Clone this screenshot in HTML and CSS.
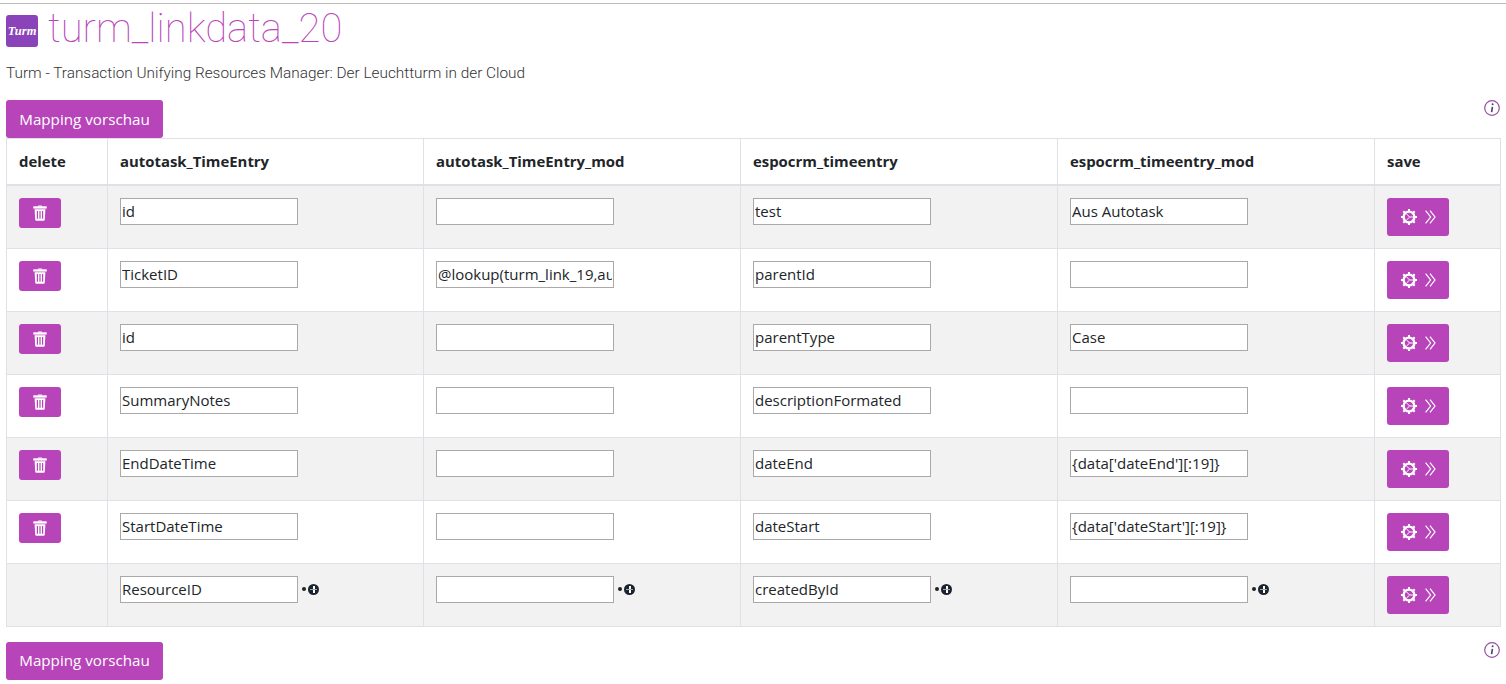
FILE: index.html
```html
<!DOCTYPE html>
<html lang="en">
<head>
    <meta charset="UTF-8">
    <meta name="viewport" content="width=device-width, initial-scale=1.0">
    <title>turm_linkdata_20</title>
    <link rel="stylesheet" href="styles.css">
</head>
<body>
    <svg width="0" height="0" class="defs">
        <symbol id="icon-trash" viewBox="0 0 14 16">
            <path d="M4.6 1.4 5.2.4h3.6l.6 1z" fill="currentColor"/>
            <path d="M.3 1.3h13.4v2.3H.3z" fill="currentColor"/>
            <path d="M1.6 4.2h10.8l-.6 10.4a1.2 1.2 0 0 1-1.2 1.2H3.4a1.2 1.2 0 0 1-1.2-1.2z" fill="currentColor"/>
            <path d="M4.4 6v7.8M7 6v7.8M9.6 6v7.8" stroke="#b744b9" stroke-width="1.2"/>
        </symbol>
        <symbol id="icon-gear" viewBox="0 0 16 16">
            <circle cx="8" cy="8" r="5.4" fill="none" stroke="currentColor" stroke-width="2.4"/>
            <path d="M8 0v3M8 13v3M0 8h3M13 8h3M2.3 2.3l2 2M11.7 11.7l2 2M13.7 2.3l-2 2M4.3 11.7l-2 2" stroke="currentColor" stroke-width="2"/>
            <path d="M5.4 4.8 8.6 8 5.4 11.2M8.6 8H12" fill="none" stroke="currentColor" stroke-width="1"/>
        </symbol>
        <symbol id="icon-chevrons" viewBox="0 0 11 14">
            <path d="M.6.6 5.6 7 .6 13.4M5 .6 10 7 5 13.4" fill="none" stroke="currentColor" stroke-width="1.2"/>
        </symbol>
        <symbol id="icon-info" viewBox="0 0 16 16">
            <circle cx="8" cy="8" r="7.3" fill="none" stroke="#96509f" stroke-width="1.2"/>
            <circle cx="8.6" cy="4.3" r="1" fill="#4f3a7a"/>
            <path d="M8.4 6.8 7.6 12.2" stroke="#4f3a7a" stroke-width="1.6"/>
        </symbol>
    </svg>

    <header class="page-head">
        <div class="title-row">
            <div class="logo">Turm</div>
            <h1>turm_linkdata_20</h1>
        </div>
        <p class="subtitle">Turm - Transaction Unifying Resources Manager: Der Leuchtturm in der Cloud</p>
    </header>

    <div class="toolbar">
        <button type="button" class="btn btn-preview">Mapping vorschau</button>
        <svg class="info"><use href="#icon-info"/></svg>
    </div>

    <table class="map-table">
        <colgroup>
            <col class="col-delete">
            <col class="col-first">
            <col class="col-field">
            <col class="col-field">
            <col class="col-field">
            <col class="col-save">
        </colgroup>
        <thead>
            <tr>
                <th>delete</th>
                <th>autotask_TimeEntry</th>
                <th>autotask_TimeEntry_mod</th>
                <th>espocrm_timeentry</th>
                <th>espocrm_timeentry_mod</th>
                <th>save</th>
            </tr>
        </thead>
        <tbody>
            <tr>
                <td><button type="button" class="btn btn-delete"><svg class="ico-trash"><use href="#icon-trash"/></svg></button></td>
                <td><input type="text" value="id"></td>
                <td><input type="text" value=""></td>
                <td><input type="text" value="test"></td>
                <td><input type="text" value="Aus Autotask"></td>
                <td><button type="button" class="btn btn-save"><svg class="ico-gear"><use href="#icon-gear"/></svg><svg class="ico-chev"><use href="#icon-chevrons"/></svg></button></td>
            </tr>
            <tr>
                <td><button type="button" class="btn btn-delete"><svg class="ico-trash"><use href="#icon-trash"/></svg></button></td>
                <td><input type="text" value="TicketID"></td>
                <td><input type="text" value="@lookup(turm_link_19,autotask_id)"></td>
                <td><input type="text" value="parentId"></td>
                <td><input type="text" value=""></td>
                <td><button type="button" class="btn btn-save"><svg class="ico-gear"><use href="#icon-gear"/></svg><svg class="ico-chev"><use href="#icon-chevrons"/></svg></button></td>
            </tr>
            <tr>
                <td><button type="button" class="btn btn-delete"><svg class="ico-trash"><use href="#icon-trash"/></svg></button></td>
                <td><input type="text" value="id"></td>
                <td><input type="text" value=""></td>
                <td><input type="text" value="parentType"></td>
                <td><input type="text" value="Case"></td>
                <td><button type="button" class="btn btn-save"><svg class="ico-gear"><use href="#icon-gear"/></svg><svg class="ico-chev"><use href="#icon-chevrons"/></svg></button></td>
            </tr>
            <tr>
                <td><button type="button" class="btn btn-delete"><svg class="ico-trash"><use href="#icon-trash"/></svg></button></td>
                <td><input type="text" value="SummaryNotes"></td>
                <td><input type="text" value=""></td>
                <td><input type="text" value="descriptionFormated"></td>
                <td><input type="text" value=""></td>
                <td><button type="button" class="btn btn-save"><svg class="ico-gear"><use href="#icon-gear"/></svg><svg class="ico-chev"><use href="#icon-chevrons"/></svg></button></td>
            </tr>
            <tr>
                <td><button type="button" class="btn btn-delete"><svg class="ico-trash"><use href="#icon-trash"/></svg></button></td>
                <td><input type="text" value="EndDateTime"></td>
                <td><input type="text" value=""></td>
                <td><input type="text" value="dateEnd"></td>
                <td><input type="text" value="{data['dateEnd'][:19]}"></td>
                <td><button type="button" class="btn btn-save"><svg class="ico-gear"><use href="#icon-gear"/></svg><svg class="ico-chev"><use href="#icon-chevrons"/></svg></button></td>
            </tr>
            <tr>
                <td><button type="button" class="btn btn-delete"><svg class="ico-trash"><use href="#icon-trash"/></svg></button></td>
                <td><input type="text" value="StartDateTime"></td>
                <td><input type="text" value=""></td>
                <td><input type="text" value="dateStart"></td>
                <td><input type="text" value="{data['dateStart'][:19]}"></td>
                <td><button type="button" class="btn btn-save"><svg class="ico-gear"><use href="#icon-gear"/></svg><svg class="ico-chev"><use href="#icon-chevrons"/></svg></button></td>
            </tr>
            <tr>
                <td></td>
                <td><div class="field-add"><input type="text" value="ResourceID"><span class="dot"></span><span class="plus"></span></div></td>
                <td><div class="field-add"><input type="text" value=""><span class="dot"></span><span class="plus"></span></div></td>
                <td><div class="field-add"><input type="text" value="createdById"><span class="dot"></span><span class="plus"></span></div></td>
                <td><div class="field-add"><input type="text" value=""><span class="dot"></span><span class="plus"></span></div></td>
                <td><button type="button" class="btn btn-save"><svg class="ico-gear"><use href="#icon-gear"/></svg><svg class="ico-chev"><use href="#icon-chevrons"/></svg></button></td>
            </tr>
        </tbody>
    </table>

    <div class="toolbar toolbar-bottom">
        <button type="button" class="btn btn-preview">Mapping vorschau</button>
        <svg class="info"><use href="#icon-info"/></svg>
    </div>
</body>
</html>
```

FILE: styles.css
```css
*{
    margin:0;
    padding:0;
    box-sizing:border-box;
}

body{
    font-family:"Open Sans", "Noto Sans", sans-serif;
    color:#212529;
    background-color:#fff;
    border-top:1px solid #bdbdbd;
    margin-top:3px;
    padding:0 6px;
    overflow:hidden;
}

.defs{
    display:block;
    height:0;
}

.title-row{
    display:flex;
    align-items:center;
    gap:10px;
    height:50px;
}

.logo{
    width:32px;
    height:32px;
    margin-top:4px;
    border-radius:3px;
    background-color:#8a43b8;
    color:#fff;
    font-family:"Liberation Serif", serif;
    font-style:italic;
    font-weight:bold;
    font-size:12.5px;
    line-height:32px;
    text-align:center;
}

h1{
    font-family:Roboto, sans-serif;
    font-weight:100;
    font-size:40px;
    line-height:50px;
    color:#b744b9;
}

.subtitle{
    font-family:Roboto, sans-serif;
    font-weight:300;
    font-size:15.35px;
    line-height:20px;
    margin-top:9px;
    color:#333;
}

.toolbar{
    display:flex;
    justify-content:space-between;
    align-items:flex-start;
    margin-top:17px;
}

.toolbar-bottom{
    margin-top:15px;
}

.info{
    width:16px;
    height:16px;
}

.btn{
    border:none;
    border-radius:3px;
    background-color:#b744b9;
    color:#fff;
    font-family:inherit;
    cursor:pointer;
}

.btn-preview{
    width:157px;
    height:38px;
    padding-bottom:1px;
    font-size:15.2px;
}

.btn-delete{
    display:flex;
    align-items:center;
    justify-content:center;
    width:42px;
    height:30px;
}

.ico-trash{
    width:14px;
    height:16px;
}

.btn-save{
    display:flex;
    align-items:center;
    justify-content:center;
    gap:8px;
    width:62px;
    height:38px;
}

.ico-gear{
    width:16px;
    height:16px;
}

.ico-chev{
    width:11px;
    height:14px;
}

.map-table{
    width:1494px;
    table-layout:fixed;
    border-collapse:collapse;
    font-size:15px;
}

.col-delete{
    width:101px;
}

.col-first{
    width:316px;
}

.col-field{
    width:317px;
}

.col-save{
    width:126px;
}

.map-table th, .map-table td{
    border:1px solid #dee2e6;
    padding:12px;
    text-align:left;
    vertical-align:top;
}

.map-table th{
    height:46px;
    padding-top:11px;
    padding-bottom:11px;
    font-weight:bold;
    font-size:14.9px;
    line-height:22px;
    border-bottom-width:2px;
}

.map-table td{
    height:63px;
}

.map-table tbody tr:nth-child(odd){
    background-color:#f2f2f2;
}

.map-table input{
    display:block;
    width:178px;
    height:27px;
    padding:0 1px 1px;
    border:1px solid #a9a9a9;
    background-color:#fff;
    color:#212529;
    font-family:inherit;
    font-size:15px;
}

.field-add{
    display:flex;
    align-items:center;
}

.dot{
    width:4px;
    height:4px;
    margin-left:4px;
    border-radius:50%;
    background-color:#222;
}

.plus{
    position:relative;
    width:11px;
    height:11px;
    margin-left:2px;
    border-radius:50%;
    background-color:#1c2230;
}

.plus::before{
    content:"";
    position:absolute;
    left:5px;
    top:2px;
    width:1.5px;
    height:7px;
    background-color:#fff;
}

.plus::after{
    content:"";
    position:absolute;
    left:2px;
    top:5px;
    width:7px;
    height:1px;
    background-color:#9aa;
}
```
